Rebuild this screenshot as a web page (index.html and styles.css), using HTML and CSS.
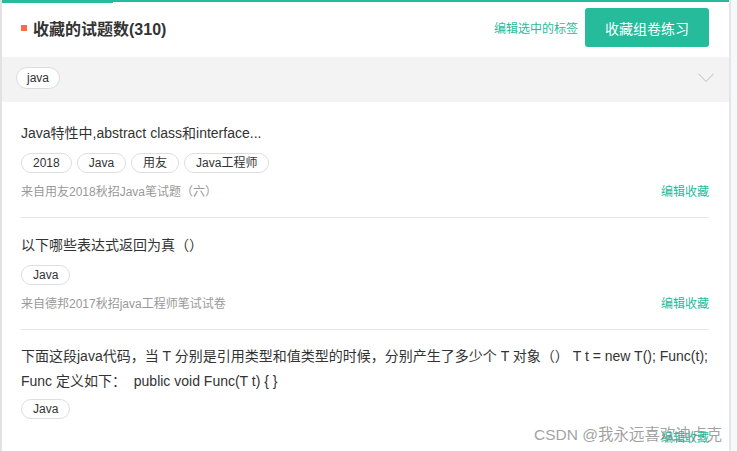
FILE: index.html
```html
<!DOCTYPE html>
<html lang="zh-CN">
<head>
<meta charset="utf-8">
<title>收藏的试题</title>
<link rel="stylesheet" href="styles.css">
</head>
<body>
<div class="panel">
  <div class="topbar"><span class="topbar-active"></span><span class="topbar-rest"></span></div>
  <div class="header">
    <h1 class="title"><span class="title-mark"></span>收藏的试题数(310)</h1>
    <div class="header-actions">
      <a class="edit-tags">编辑选中的标签</a>
      <button class="btn-practice">收藏组卷练习</button>
    </div>
  </div>
  <div class="filter-bar">
    <span class="filter-tag">java</span>
    <svg class="chevron" width="16" height="10" viewBox="0 0 16 10"><polyline points="0.5,0.8 8,8.5 15.5,0.8" fill="none" stroke="#bdbdbd" stroke-width="1"/></svg>
  </div>
  <ul class="list">
    <li class="item">
      <div class="item-title">Java特性中,abstract class和interface...</div>
      <div class="tags"><span class="tag">2018</span><span class="tag">Java</span><span class="tag">用友</span><span class="tag">Java工程师</span></div>
      <div class="meta"><span class="source">来自用友2018秋招Java笔试题（六）</span><a class="edit">编辑收藏</a></div>
    </li>
    <li class="item">
      <div class="item-title">以下哪些表达式返回为真（）</div>
      <div class="tags"><span class="tag">Java</span></div>
      <div class="meta"><span class="source">来自德邦2017秋招java工程师笔试试卷</span><a class="edit">编辑收藏</a></div>
    </li>
    <li class="item">
      <div class="item-title item-title-code">下面这段java代码，当 T 分别是引用类型和值类型的时候，分别产生了多少个 T 对象（） T t = new T(); Func(t);<br>Func 定义如下：&nbsp; public void Func(T t) { }</div>
      <div class="tags"><span class="tag">Java</span></div>
      <div class="meta"><span class="source"></span><a class="edit">编辑收藏</a></div>
    </li>
  </ul>
</div>
<div class="watermark">CSDN @我永远喜欢迪卢克</div>
</body>
</html>
```
FILE: styles.css
```css
* { box-sizing: border-box; }
html, body { margin: 0; padding: 0; }
body {
  background: #f7f8fa;
  font-family: "Liberation Sans", Arial, "Noto Sans CJK SC", sans-serif;
  color: #333;
  width: 737px;
  height: 451px;
  overflow: hidden;
  position: relative;
}
.panel {
  width: 731px;
  height: 451px;
  background: #fff;
  border-left: 2px solid #e2e2e2;
  border-right: 2px solid #e6e6e6;
  overflow: hidden;
}
.topbar { display: flex; align-items: flex-start; height: 3px; margin-left: -2px; }
.topbar-active { width: 113px; height: 3px; background: #25bb9b; }
.topbar-rest { flex: 1; height: 2px; background: #25bb9b; }
.header {
  display: flex;
  align-items: center;
  justify-content: space-between;
  height: 54px;
  padding: 5px 20px 10px 19px;
}
.title {
  margin: 0;
  font-size: 16px;
  font-weight: bold;
  display: flex;
  align-items: center;
  color: #333;
}
.title-mark {
  width: 6px;
  height: 6px;
  background: #fd6a4b;
  margin-right: 6px;
}
.header-actions { display: flex; align-items: center; }
.edit-tags { font-size: 12px; color: #25bb9b; margin-right: 7px; }
.btn-practice {
  width: 124px;
  height: 39px;
  border: none;
  border-radius: 3px;
  background: #25bb9b;
  color: #fff;
  font-family: inherit;
  font-size: 14px;
  padding: 0;
}
.filter-bar {
  height: 45px;
  background: #f3f3f3;
  display: flex;
  align-items: flex-start;
  justify-content: space-between;
  padding: 10px 15px 0 14px;
}
.filter-tag {
  display: inline-block;
  height: 22px;
  line-height: 20px;
  padding: 0 10px;
  border: 1px solid #dcdcdc;
  border-radius: 11px;
  background: #fff;
  font-size: 12px;
  color: #333;
}
.chevron { margin-top: 6px; }
.list { list-style: none; margin: 0; padding: 4px 20px 0 19px; }
.item {
  padding: 15px 0 15px;
  border-bottom: 1px solid #e5e5e5;
}
.item:last-child { border-bottom: none; padding-top: 14px; }
.item-title { font-size: 14px; line-height: 25px; color: #333; }
.item-title-code { white-space: nowrap; }
.tags { display: flex; gap: 5px; margin-top: 7px; }
.item:last-child .tags { margin-top: 5px; }
.tag {
  height: 20px;
  line-height: 18px;
  padding: 0 11px;
  border: 1px solid #dedede;
  border-radius: 10px;
  font-size: 12px;
  color: #333;
}
.meta {
  display: flex;
  justify-content: space-between;
  margin-top: 9px;
  line-height: 20px;
  font-size: 12px;
}
.source { color: #999; }
.edit { color: #25bb9b; }
.watermark {
  position: absolute;
  right: 15px;
  bottom: 7px;
  font-size: 15.5px;
  color: rgba(130, 130, 130, 0.75);
}
```
